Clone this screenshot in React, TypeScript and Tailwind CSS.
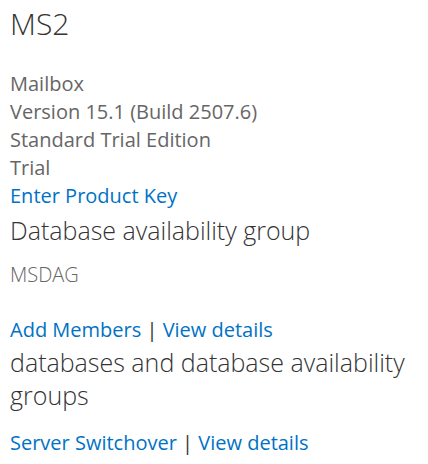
import React from 'react';

interface ILinkPairProps {
    first: string,
    second: string,
    className?: string,
}

const LinkPair: React.FC<ILinkPairProps> = ({ first, second, className }) => (
    <div className={`text-[20px] leading-[28px] text-[#333] ${className ?? ''}`}>
        <a href="#" className="text-[#0072c6] hover:underline">{first}</a>
        {' | '}
        <a href="#" className="text-[#0072c6] hover:underline">{second}</a>
    </div>
);

export default function App() {
    return (
        <div className="min-h-screen bg-white px-[10px] pt-[4px] font-['Open_Sans',sans-serif]">
            <h1 className="text-[30px] font-light leading-[40px] text-[#333]">MS2</h1>

            <div className="mt-[26px] text-[20px] leading-[28px] text-[#666]">
                <div>Mailbox</div>
                <div>Version 15.1 (Build 2507.6)</div>
                <div>Standard Trial Edition</div>
                <div>Trial</div>
                <a href="#" className="block text-[#0072c6] hover:underline">Enter Product Key</a>
            </div>

            <h2 className="mt-[4px] text-[25px] font-light leading-[32px] text-[#333]">
                Database availability group
            </h2>
            <div className="mt-[15px] text-[20px] font-light leading-[28px] text-[#666]">MSDAG</div>
            <LinkPair first="Add Members" second="View details" className="mt-[27px]" />

            <h2 className="mt-[2px] text-[25px] font-light leading-[33px] text-[#333]">
                databases and database availability groups
            </h2>
            <LinkPair first="Server Switchover" second="View details" className="mt-[17px]" />
        </div>
    );
}
